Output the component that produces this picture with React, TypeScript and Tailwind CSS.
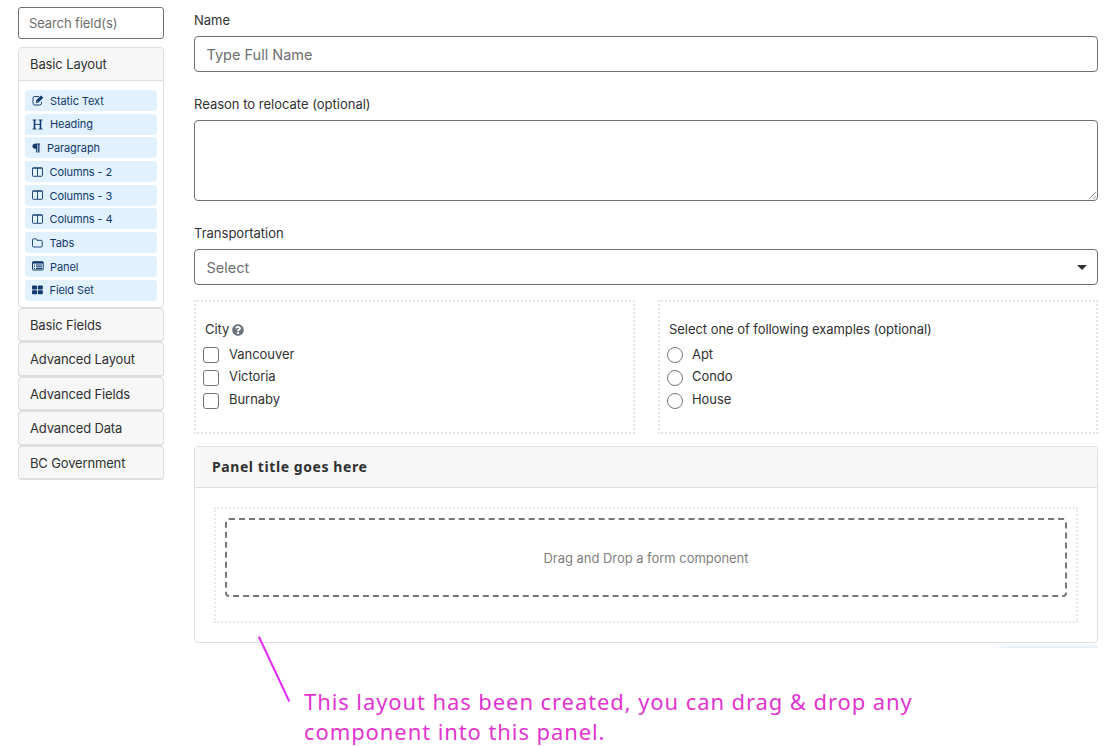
import type { ReactNode } from "react";
import { FaQuestionCircle } from "react-icons/fa";

const EditIcon = () => (
  <svg width="12" height="11" viewBox="0 0 24 22" fill="none" stroke="currentColor" strokeWidth="1.900">
    <path d="M14 3H5.5A3.5 3.5 0 0 0 2 6.500v10A3.500 3.500 0 0 0 5.500 20h10a3.500 3.500 0 0 0 3.500-3.500V13.500" />
    <path d="M8 15.500v-4.500L18 1l4.500 4.500L12.500 15.500z" fill="currentColor" stroke="none" />
    <path d="M10 12.300l1.500 1.500" stroke="#e1f1fe" strokeWidth="1.500" />
  </svg>
);

const HeadingIcon = () => (
  <svg width="11" height="11" viewBox="0 0 11 11" fill="none" stroke="currentColor">
    <path d="M2.500 1v9M8.500 1v9" strokeWidth="1.600" />
    <path d="M.5 1h4M6.500 1h4M.5 10h4M6.500 10h4M2.500 5.400h6" strokeWidth=".9" />
  </svg>
);

const ParagraphIcon = () => (
  <svg width="9" height="10" viewBox="0 0 9 10" fill="currentColor">
    <path d="M8.200.5v1H7.500V9.500H6.200V1.500H5.400V9.500H4.100V5.800C2 5.800.4 4.800.4 3.200S2 .5 4 .5z" />
  </svg>
);

const ColumnsIcon = () => (
  <svg width="11" height="10" viewBox="0 0 11 10" fill="none" stroke="currentColor" strokeWidth=".9">
    <rect x=".5" y=".8" width="10" height="8.500" rx=".7" />
    <path d="M.5 1.200h10M5.500 1v8" />
  </svg>
);

const FolderIcon = () => (
  <svg width="11" height="10" viewBox="0 0 11 10" fill="none" stroke="currentColor" strokeWidth=".9">
    <path d="M.5 7.800V2A1.200 1.200 0 0 1 1.700.8h2A1.200 1.200 0 0 1 4.900 2v.3h4A1.300 1.300 0 0 1 10.300 3.500v4.200A1.200 1.200 0 0 1 9.100 9H1.700A1.200 1.200 0 0 1 .5 7.800z" />
  </svg>
);

const PanelIcon = () => (
  <svg width="12" height="10" viewBox="0 0 12 10" fill="none" stroke="currentColor">
    <rect x=".5" y=".8" width="10.700" height="8.200" rx=".8" />
    <path d="M.5 1.600h10.700" strokeWidth="2" />
    <path d="M2 4h1M4 4h6M2 5.800h1M4 5.800h6M2 7.500h1M4 7.500h6" strokeWidth="1" />
  </svg>
);

const GridIcon = () => (
  <svg width="11" height="10" viewBox="0 0 11 10" fill="currentColor">
    <rect x="0" y=".6" width="5" height="4" rx=".8" />
    <rect x="5.800" y=".6" width="5" height="4" rx=".8" />
    <rect x="0" y="5.300" width="5" height="4" rx=".8" />
    <rect x="5.800" y="5.300" width="5" height="4" rx=".8" />
  </svg>
);

const items: { label: string; icon: ReactNode; slot: string }[] = [
  { label: "Static Text", icon: <EditIcon />, slot: "w-[18px]" },
  { label: "Heading", icon: <HeadingIcon />, slot: "w-[18px]" },
  { label: "Paragraph", icon: <ParagraphIcon />, slot: "w-[15px]" },
  { label: "Columns - 2", icon: <ColumnsIcon />, slot: "w-[17.500px]" },
  { label: "Columns - 3", icon: <ColumnsIcon />, slot: "w-[17.500px]" },
  { label: "Columns - 4", icon: <ColumnsIcon />, slot: "w-[17.500px]" },
  { label: "Tabs", icon: <FolderIcon />, slot: "w-[17.500px]" },
  { label: "Panel", icon: <PanelIcon />, slot: "w-[18px]" },
  { label: "Field Set", icon: <GridIcon />, slot: "w-[17.500px]" },
];

const groups = ["Basic Fields", "Advanced Layout", "Advanced Fields", "Advanced Data", "BC Government"];

function Sidebar() {
  return (
    <aside className="w-[146px] shrink-0 pt-[7px]">
      <div className="flex h-8 items-center rounded-[3px] border border-[#707070] pt-0.5 pl-2.5 text-[13px] tracking-[-0.1px] text-[#6c6f73]">
        Search field(s)
      </div>
      <div className="mt-2 h-[261px] rounded-[4px] border border-[#dedede]">
        <div className="flex h-[33px] items-center rounded-t-[3px] border-b border-[#dedede] bg-[#f7f7f7] pt-0.5 pl-[11px] text-[13px] tracking-[-0.12px] text-[#313132]">
          Basic Layout
        </div>
        <div className="flex flex-col gap-[2.700px] px-1.5 pt-[9px]">
          {items.map((item) => (
            <div
              key={item.label}
              className="flex h-[21px] items-center rounded-[3px] bg-[#e1f1fe] pl-[7px] text-[11px] tracking-[-0.1px] text-[#12396b]"
            >
              <span className={item.slot}>{item.icon}</span>
              <span className="pt-px">{item.label}</span>
            </div>
          ))}
        </div>
      </div>
      <div className="flex flex-col">
        {groups.map((g) => (
          <div
            key={g}
            className="flex h-[34.400px] items-center rounded-[4px] border border-b-2 border-[#dedede] bg-[#f7f7f7] pt-0.5 pl-[11px] text-[13px] tracking-[-0.15px] text-[#313132]"
          >
            {g}
          </div>
        ))}
      </div>
    </aside>
  );
}

function Choice({ title, hint, options, round }: { title: string; hint?: boolean; options: string[]; round?: boolean }) {
  return (
    <div
      className={
        round
          ? "h-[134px] w-[440px] border-2 border-dotted border-[#e4e4e4] pt-[18px] pl-[7px]"
          : "h-[134px] w-[441px] border-2 border-dotted border-[#e4e4e4] pt-[18px] pl-[7px]"
      }
    >
      <div className="flex h-5 items-center gap-[3px] pl-[2px] text-[13px] tracking-[-0.05px]">
        {title}
        {hint && <FaQuestionCircle size={12} className="-mt-px text-[#6c757d]" />}
      </div>
      <div className="mt-[3px] flex flex-col">
        {options.map((o) => (
          <div key={o} className="flex h-[22.700px] items-center text-[13px] tracking-[-0.05px]">
            <span
              className={
                round
                  ? "mt-[2px] mr-[9px] size-4 rounded-full border border-[#757575]"
                  : "mt-[2px] mr-[10px] size-4 rounded-[3px] border border-[#757575]"
              }
            />
            {o}
          </div>
        ))}
      </div>
    </div>
  );
}

export default function App() {
  return (
    <div className="relative flex h-[746px] w-[1108px] overflow-hidden bg-white pl-[18px] font-['Inter',sans-serif] text-[#313132]">
      <Sidebar />
      <main className="ml-[30px] w-[904px] text-[13px]">
        <div className="flex h-9 items-center pt-1.5">Name</div>
        <div className="flex h-9 items-center rounded-[4px] border border-[#707070] pt-px pl-[11.500px] text-[14.500px] text-[#6c6f73]">
          Type Full Name
        </div>
        <div className="flex h-12 items-end pb-[6px]">Reason to relocate (optional)</div>
        <div className="flex h-[81px] items-end justify-end rounded-[4px] border border-[#707070]">
          <svg width="9" height="9" viewBox="0 0 9 9" fill="none" stroke="#777" strokeWidth=".8">
            <path d="M1 8l7-7M5 8l3-3" />
          </svg>
        </div>
        <div className="flex h-12 items-end pb-[6px]">Transportation</div>
        <div className="flex h-9 items-center justify-between rounded-[4px] border border-[#707070] pt-px pr-[10px] pl-[11.500px] text-[14.500px] text-[#6c6f73]">
          Select
          <svg width="10" height="5" viewBox="0 0 10 5" fill="#313132">
            <path d="M0 0h10L5 5z" />
          </svg>
        </div>
        <div className="mt-[15px] flex justify-between">
          <Choice title="City" hint options={["Vancouver", "Victoria", "Burnaby"]} />
          <Choice title="Select one of following examples (optional)" round options={["Apt", "Condo", "House"]} />
        </div>
        <section className="mt-3 h-[197px] rounded-[4px] border border-[#dfe0e2]">
          <div className="flex h-[41px] items-center rounded-t-[3px] border-b border-[#dfe0e2] bg-[#f7f7f7] pb-0.5 pl-[17px] font-['Noto_Sans',sans-serif] text-[14px] font-bold tracking-[0.58px]">
            Panel title goes here
          </div>
          <div className="mx-[19px] mt-[19px] h-[116px] border-2 border-dotted border-[#e8e8e8] px-[9px] pt-[9px]">
            <div className="flex h-[79px] items-center justify-center rounded-[4px] border-2 border-dashed border-[#777] pt-0.5 text-[13px] tracking-[-0.04px] text-[#808080]">
              Drag and Drop a form component
            </div>
          </div>
        </section>
        <div className="ml-auto h-[5px] w-[112px] bg-linear-to-b from-white to-[#e8effa] mask-l-from-80%" />
        <p className="mt-[38px] ml-[110px] font-['Noto_Sans',sans-serif] text-[22px] leading-[30px] tracking-[0.91px] whitespace-nowrap text-[#e135cf]">
          This layout has been created, you can drag &amp; drop any
          <br />
          component into this panel.
        </p>
      </main>
      <svg className="absolute top-[634px] left-[256px]" width="36" height="70" viewBox="0 0 36 70">
        <path d="M2.800 2.500L33.300 67.500" stroke="#e02cf5" strokeWidth="2" />
      </svg>
    </div>
  );
}
